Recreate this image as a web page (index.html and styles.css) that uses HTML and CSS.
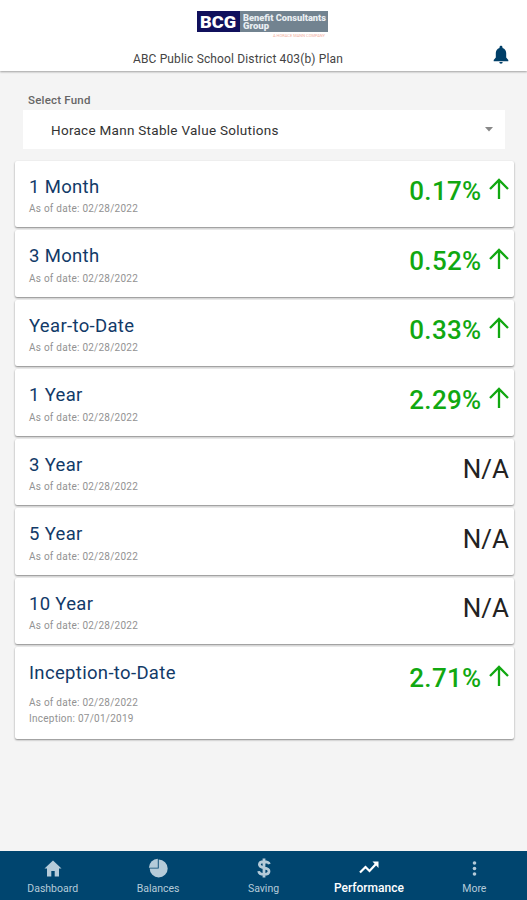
FILE: index.html
```html
<!DOCTYPE html>
<html lang="en">
<head>
    <meta charset="UTF-8">
    <meta name="viewport" content="width=device-width, initial-scale=1.0">
    <title>Performance</title>
    <link rel="stylesheet" href="styles.css">
</head>
<body>
    <header class="header">
        <div class="logo">
            <div class="logo-box">
                <div class="logo-mark"><svg width="40" height="21"><text x="1" y="17" textLength="36" lengthAdjust="spacingAndGlyphs">BCG</text></svg></div>
                <div class="logo-name"><svg width="88" height="21"><text x="3" y="9.5" textLength="83" lengthAdjust="spacingAndGlyphs">Benefit Consultants</text><text x="3" y="18" textLength="26" lengthAdjust="spacingAndGlyphs">Group</text></svg></div>
            </div>
            <svg class="logo-tag" width="54" height="6"><text x="1" y="4" textLength="52" lengthAdjust="spacingAndGlyphs">A HORACE MANN COMPANY</text></svg>
        </div>
        <div class="plan-row">
            <div class="plan">ABC Public School District 403(b) Plan</div>
            <svg class="bell" width="16" height="20" viewBox="0 0 16 20"><path d="M8 .8c-.9 0-1.5.6-1.5 1.5v.6C4 3.5 2.8 5.7 2.8 8v4.5L.7 15v1.2h14.6V15l-2.1-2.5V8c0-2.300-1.200-4.500-3.700-5.100v-.6C9.500 1.400 8.900.8 8 .8zM6.300 17a1.700 1.700 0 0 0 3.400 0z"/></svg>
        </div>
    </header>

    <main class="content">
        <div class="fund-label">Select Fund</div>
        <div class="fund-select">
            <span>Horace Mann Stable Value Solutions</span>
            <svg width="8" height="5" viewBox="0 0 8 5"><path d="M0 0h8L4 4.5z"/></svg>
        </div>

        <div class="cards">
            <div class="card">
                <div class="info">
                    <div class="period">1 Month</div>
                    <div class="date">As of date: 02/28/2022</div>
                </div>
                <div class="value up">0.17%<svg class="arrow" viewBox="0 0 20 22"><path d="M10 21V2M1 11l9-9 9 9"/></svg></div>
            </div>
            <div class="card">
                <div class="info">
                    <div class="period">3 Month</div>
                    <div class="date">As of date: 02/28/2022</div>
                </div>
                <div class="value up">0.52%<svg class="arrow" viewBox="0 0 20 22"><path d="M10 21V2M1 11l9-9 9 9"/></svg></div>
            </div>
            <div class="card">
                <div class="info">
                    <div class="period">Year-to-Date</div>
                    <div class="date">As of date: 02/28/2022</div>
                </div>
                <div class="value up">0.33%<svg class="arrow" viewBox="0 0 20 22"><path d="M10 21V2M1 11l9-9 9 9"/></svg></div>
            </div>
            <div class="card">
                <div class="info">
                    <div class="period">1 Year</div>
                    <div class="date">As of date: 02/28/2022</div>
                </div>
                <div class="value up">2.29%<svg class="arrow" viewBox="0 0 20 22"><path d="M10 21V2M1 11l9-9 9 9"/></svg></div>
            </div>
            <div class="card">
                <div class="info">
                    <div class="period">3 Year</div>
                    <div class="date">As of date: 02/28/2022</div>
                </div>
                <div class="value">N/A</div>
            </div>
            <div class="card">
                <div class="info">
                    <div class="period">5 Year</div>
                    <div class="date">As of date: 02/28/2022</div>
                </div>
                <div class="value">N/A</div>
            </div>
            <div class="card">
                <div class="info">
                    <div class="period">10 Year</div>
                    <div class="date">As of date: 02/28/2022</div>
                </div>
                <div class="value">N/A</div>
            </div>
            <div class="card card-last">
                <div class="info">
                    <div class="period">Inception-to-Date</div>
                    <div class="date">As of date: 02/28/2022</div>
                    <div class="date">Inception: 07/01/2019</div>
                </div>
                <div class="value up">2.71%<svg class="arrow" viewBox="0 0 20 22"><path d="M10 21V2M1 11l9-9 9 9"/></svg></div>
            </div>
        </div>
    </main>

    <nav class="tabs">
        <div class="tab">
            <svg width="20" height="20" viewBox="0 0 20 20"><path d="M10 2.5L1.5 10.5H4v8h4.300v-5.500h3.400v5.500H16v-8h2.500z"/></svg>
            <span>Dashboard</span>
        </div>
        <div class="tab">
            <svg width="20" height="20" viewBox="0 0 20 20"><path d="M10.7 1.5A9 9 0 1 1 1.7 10.5H10.7z"/><path d="M9.8 .8v8.900H.9A8.900 8.900 0 0 1 9.800 .8z"/></svg>
            <span>Balances</span>
        </div>
        <div class="tab">
            <svg width="20" height="20" viewBox="0 0 20 20"><path class="line dollar" d="M15.300 6.200C14.800 4.200 12.800 3.600 10 3.600c-2.800 0-4.600 1-4.600 3 0 4.600 9.600 2 9.600 6.600 0 2.200-2.100 3.200-5 3.200-3 0-5-1-5.300-3.300M10 .5v19"/></svg>
            <span>Saving</span>
        </div>
        <div class="tab active">
            <svg width="20" height="20" viewBox="0 0 20 20"><path class="line" d="M1 14.500l5.500-5.500 4 4 6.500-7"/><path d="M13.500 3.500h6V10z"/></svg>
            <span>Performance</span>
        </div>
        <div class="tab">
            <svg width="20" height="20" viewBox="0 0 20 20"><circle cx="10.500" cy="5" r="1.800"/><circle cx="10.500" cy="10.500" r="1.800"/><circle cx="10.500" cy="16" r="1.800"/></svg>
            <span>More</span>
        </div>
    </nav>
</body>
</html>
```

FILE: styles.css
```css
* {
    box-sizing: border-box;
}

body {
    margin: 0;
    height: 900px;
    display: flex;
    flex-direction: column;
    background-color: #f4f4f4;
    font-family: Roboto, sans-serif;
    overflow: hidden;
}

svg {
    display: block;
}

/* Header */
.header {
    height: 71px;
    padding-top: 11px;
    background-color: #fff;
    box-shadow: 0 1px 2px rgba(0, 0, 0, 0.35);
}

.logo {
    width: 131px;
    margin-left: 197px;
}

.logo-box {
    display: flex;
    height: 21px;
}

.logo-mark {
    width: 43px;
    padding-left: 2px;
    background-color: #10105c;
}

.logo-mark text {
    font-size: 17px;
    font-weight: 900;
    fill: #fff;
}

.logo-name {
    width: 88px;
    background-color: #728390;
}

.logo-name text {
    font-size: 9px;
    font-weight: 900;
    fill: #e9eef2;
}

.logo-tag {
    margin: 1px 0 0 75px;
}

.logo-tag text {
    font-size: 4px;
    fill: #f2b0a2;
}

.plan-row {
    display: flex;
    justify-content: space-between;
    height: 32px;
    padding: 6px 18px 0 133px;
}

.plan {
    padding-top: 6px;
    font-size: 12px;
    line-height: 16px;
    letter-spacing: 0.14px;
    color: #444;
}

.bell {
    fill: #003f68;
}

/* Fund picker */
.content {
    flex: 1;
    padding: 20px 13px 0 15px;
}

.fund-label {
    margin-left: 13px;
    font-size: 11.5px;
    font-weight: 500;
    line-height: 18px;
    letter-spacing: 0.2px;
    color: #666;
}

.fund-select {
    display: flex;
    align-items: center;
    justify-content: space-between;
    height: 39px;
    margin: 1px 9px 11.5px 8px;
    padding: 0 12px 0 28px;
    background-color: #fff;
    font-size: 13.5px;
    letter-spacing: 0.28px;
    color: #333;
}

.fund-select svg {
    fill: #888;
}

/* Performance cards */
.cards {
    display: flex;
    flex-direction: column;
    gap: 3px;
}

.card {
    display: flex;
    justify-content: space-between;
    height: 66.5px;
    padding: 13px 5px 0 14px;
    background-color: #fff;
    border-radius: 2px;
    box-shadow: 0 1px 2px rgba(0, 0, 0, 0.45);
}

.period {
    font-size: 18.5px;
    line-height: 26px;
    letter-spacing: 0.33px;
    color: #123a68;
}

.date {
    margin-top: 1px;
    font-size: 10px;
    line-height: 15px;
    letter-spacing: 0.25px;
    color: #929292;
}

.period + .date {
    margin-top: 1.5px;
}

.value {
    display: flex;
    height: 36px;
    margin-top: -0.5px;
    font-size: 26px;
    line-height: 36px;
    color: #222;
}

.up {
    font-weight: 500;
    letter-spacing: 0.3px;
    color: #11a811;
}

.arrow {
    width: 20px;
    height: 22px;
    margin: 5px 0 0 7.5px;
    fill: none;
    stroke: #11a811;
    stroke-width: 2.3;
}

.card-last {
    height: 91.5px;
}

.card-last .period {
    margin-bottom: 9px;
}

/* Bottom tabs */
.tabs {
    display: flex;
    height: 49px;
    background-color: #00456f;
}

.tab {
    flex: 1;
    display: flex;
    flex-direction: column;
    align-items: center;
    padding-top: 7px;
    font-size: 10.5px;
    line-height: 16px;
    color: #b5cbd9;
    fill: #b5cbd9;
    stroke: none;
}

.tab span {
    margin-top: 3px;
}

.tab .line {
    fill: none;
    stroke: #fff;
    stroke-width: 2.2;
}

.tab .dollar {
    stroke: #b5cbd9;
    stroke-width: 2.8;
}

.tab.active {
    font-size: 12px;
    font-weight: 500;
    color: #fff;
    fill: #fff;
}

.tab.active span {
    margin-top: 2px;
}
```
